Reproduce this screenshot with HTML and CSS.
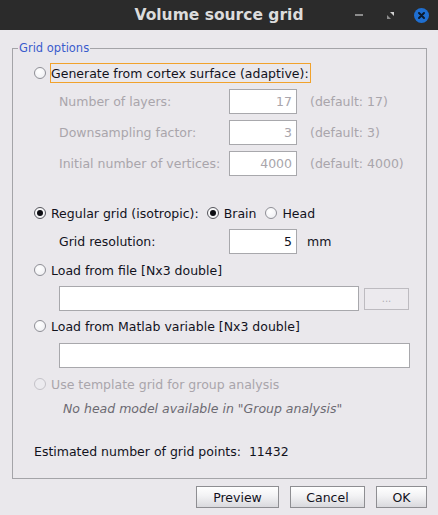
FILE: index.html
```html
<!DOCTYPE html>
<html>
<head>
<meta charset="utf-8">
<link rel="stylesheet" href="styles.css">
</head>
<body>
<div class="window">
  <header class="titlebar">
    <div></div>
    <h1 class="title">Volume source grid</h1>
    <div class="win-controls">
      <svg class="ic-min" width="8" height="3" viewBox="0 0 8 3"><rect x="0" y="0" width="8" height="2" fill="#8c8c8c"/></svg>
      <svg class="ic-max" width="7" height="7" viewBox="0 0 7 7"><path d="M3 0H7V4Z" fill="#d0d0d0"/><path d="M0 3L4 7H0Z" fill="#8c8c8c"/></svg>
      <svg class="ic-close" width="15" height="15" viewBox="0 0 15 15"><circle cx="7.5" cy="7.5" r="7.5" fill="#1f6fd1"/><path d="M5 5L10 10M10 5L5 10" stroke="#0c1a2c" stroke-width="2" stroke-linecap="round"/></svg>
    </div>
  </header>
  <main class="content">
    <fieldset class="group">
      <legend class="legend">Grid options</legend>
      <div class="inner">
        <div class="row radio-row gen">
          <span class="radio"></span><span class="rlabel focus">Generate from cortex surface (adaptive):</span>
        </div>
        <div class="row param first">
          <span class="plabel dis">Number of layers:</span><span class="field dis">17</span><span class="hint dis">(default: 17)</span>
        </div>
        <div class="row param">
          <span class="plabel dis">Downsampling factor:</span><span class="field dis">3</span><span class="hint dis">(default: 3)</span>
        </div>
        <div class="row param">
          <span class="plabel dis">Initial number of vertices:</span><span class="field dis">4000</span><span class="hint dis">(default: 4000)</span>
        </div>
        <div class="row radio-row regular">
          <span class="radio on"></span><span class="rlabel">Regular grid (isotropic):</span>
          <span class="radio on sub"></span><span class="rlabel">Brain</span>
          <span class="radio sub2"></span><span class="rlabel">Head</span>
        </div>
        <div class="row param">
          <span class="plabel">Grid resolution:</span><span class="field">5</span><span class="unit">mm</span>
        </div>
        <div class="row radio-row">
          <span class="radio"></span><span class="rlabel">Load from file [Nx3 double]</span>
        </div>
        <div class="row file-row">
          <span class="field file"></span><span class="browse">...</span>
        </div>
        <div class="row radio-row matlab">
          <span class="radio"></span><span class="rlabel">Load from Matlab variable [Nx3 double]</span>
        </div>
        <div class="row file-row mat-row">
          <span class="field wide"></span>
        </div>
        <div class="row radio-row">
          <span class="radio off"></span><span class="rlabel dis">Use template grid for group analysis</span>
        </div>
        <div class="row note">No head model available in "Group analysis"</div>
        <div class="row estimate">Estimated number of grid points:  11432</div>
      </div>
    </fieldset>
    <footer class="buttons">
      <button class="btn preview">Preview</button>
      <button class="btn cancel">Cancel</button>
      <button class="btn ok">OK</button>
    </footer>
  </main>
</div>
</body>
</html>
```
FILE: styles.css
```css
* { box-sizing: border-box; }
body {
  margin: 0;
  background: #eae8ec;
  font-family: "DejaVu Sans", sans-serif;
  font-size: 12.5px;
  color: #12121c;
}
.window {
  width: 438px;
  height: 515px;
  display: flex;
  flex-direction: column;
}
.titlebar {
  height: 30px;
  background: #2b2b2b;
  display: grid;
  grid-template-columns: 1fr auto 1fr;
  align-items: center;
}
.title {
  margin: 0;
  font-size: 15.5px;
  font-weight: bold;
  color: #dcdcdc;
  line-height: 30px;
}
.win-controls {
  justify-self: end;
  display: flex;
  align-items: center;
  padding-right: 9px;
}
.ic-min { margin-right: 24px; }
.ic-max { margin-right: 20px; }
.content {
  flex: 1;
  display: flex;
  flex-direction: column;
  padding: 11px 11px 0 12px;
}
.group {
  margin: 0;
  border: 1px solid #a4a4a8;
  padding: 0 15px 17px 5px;
  min-width: 0;
}
.legend {
  padding: 0 1px;
  font-size: 11.5px;
  line-height: 14px;
  color: #3a5ccc;
}
.inner {
  padding-left: 16px;
  display: flex;
  flex-direction: column;
}
.row {
  display: flex;
  align-items: center;
  white-space: pre;
}
.radio-row { height: 20px; margin-top: 6px; }
.gen { margin-top: 8px; }
.param { height: 25px; margin-top: 6px; }
.regular { margin-top: 27px; }
.matlab { margin-top: 5px; }
.radio {
  width: 12px;
  height: 12px;
  border-radius: 50%;
  border: 1px solid #8f8f96;
  background: radial-gradient(circle at 40% 35%, #ffffff 0%, #ececf0 100%);
  margin-right: 4px;
  flex: none;
  position: relative;
}
.radio.on { border-color: #55555c; }
.radio.on::after {
  content: "";
  position: absolute;
  left: 2px;
  top: 2px;
  width: 6px;
  height: 6px;
  border-radius: 50%;
  background: #0c0c12;
}
.radio.off { border-color: #c4c2c8; background: #ecebef; }
.radio.sub { margin-left: 6px; }
.radio.sub2 { margin-left: 7px; }
.rlabel {
  border: 1px solid transparent;
  padding: 0 1px 0 0;
  height: 20px;
  display: flex;
  align-items: center;
}
.rlabel.focus { border-color: #f1a22c; }
.dis { color: #a9a5ab; }
.plabel { margin-left: 25px; width: 170px; }
.field {
  width: 68px;
  height: 25px;
  border: 1px solid #a8a8ac;
  background: #ffffff;
  display: flex;
  align-items: center;
  justify-content: flex-end;
  padding-right: 4px;
  color: #12121c;
}
.field.dis { color: #a9a5ab; }
.hint { margin-left: 13px; }
.unit { margin-left: 10px; }
.file-row { height: 25px; margin-top: 6px; }
.mat-row { margin-top: 7px; }
.field.file { margin-left: 25px; width: 300px; }
.field.wide { margin-left: 25px; width: 351px; }
.browse {
  margin-left: 5px;
  width: 45px;
  height: 22px;
  border: 1px solid #bdbbc0;
  background: #eceaee;
  color: #b0aeb4;
  font-size: 10px;
  display: flex;
  align-items: center;
  justify-content: center;
}
.note {
  height: 20px;
  margin-top: 4px;
  margin-left: 29px;
  font-style: italic;
  color: #6c6a72;
}
.estimate { height: 20px; margin-top: 23px; }
.buttons {
  display: flex;
  justify-content: flex-end;
  gap: 11px;
  margin-top: 7px;
}
.btn {
  height: 22px;
  border: 1px solid #8e8e92;
  background: linear-gradient(#ffffff 0%, #f2f2f4 45%, #d9d9dd 100%);
  font-family: "DejaVu Sans", sans-serif;
  font-size: 12.5px;
  color: #12121c;
  padding: 0;
}
.preview { width: 83px; }
.cancel { width: 75px; }
.ok { width: 51px; }
```
